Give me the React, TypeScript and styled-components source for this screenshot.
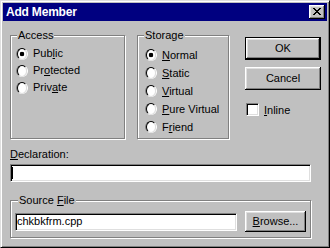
import React from "react";
import styled, { createGlobalStyle } from "styled-components";

const GlobalStyle = createGlobalStyle`
	* {
		box-sizing: border-box;
	}
	html, body {
		margin: 0;
		padding: 0;
		background: #c0c0c0;
	}
	body {
		font-family: "Liberation Sans", Arial, sans-serif;
		font-size: 11px;
		color: #000;
	}
`;

// hot: index of the underlined access-key letter
const accessOptions = [
	{ id: "public", text: "Public", hot: 3, checked: true },
	{ id: "protected", text: "Protected", hot: 2, checked: false },
	{ id: "private", text: "Private", hot: 4, checked: false },
];

const storageOptions = [
	{ id: "normal", text: "Normal", hot: 0, checked: true },
	{ id: "static", text: "Static", hot: 0, checked: false },
	{ id: "virtual", text: "Virtual", hot: 0, checked: false },
	{ id: "pure", text: "Pure Virtual", hot: 0, checked: false },
	{ id: "friend", text: "Friend", hot: 1, checked: false },
];

function Mnemonic({ text, hot }: { text: string; hot: number }) {
	return (
		<span>
			{text.slice(0, hot)}
			<Key>{text[hot]}</Key>
			{text.slice(hot + 1)}
		</span>
	);
}

function CloseGlyph() {
	const cells = [
		"11....11",
		".11..11.",
		"..1111..",
		"...11...",
		"..1111..",
		".11..11.",
		"11....11",
	];
	return (
		<svg width="8" height="7" viewBox="0 0 8 7" shapeRendering="crispEdges">
			{cells.flatMap((row, y) =>
				row.split("").map((c, x) =>
					c === "1" ? <rect key={`${x}-${y}`} x={x} y={y} width="1" height="1" fill="#000" /> : null
				)
			)}
		</svg>
	);
}

export default function App() {
	return (
		<>
			<GlobalStyle />
			<Window>
				<TitleBar>
					<Title>Add Member</Title>
					<CloseButton>
						<CloseGlyph />
					</CloseButton>
				</TitleBar>
				<Body>
					<TopRow>
						<Group $width={115} $height={104}>
							<GroupLabel>Access</GroupLabel>
							<RadioList $padTop={3} $padLeft={5}>
								{accessOptions.map((opt) => (
									<RadioRow key={opt.id} $rowHeight={17}>
										<RadioDot $checked={opt.checked} />
										<Mnemonic text={opt.text} hot={opt.hot} />
									</RadioRow>
								))}
							</RadioList>
						</Group>
						<Group $width={92} $height={104} $gap={12}>
							<GroupLabel>Storage</GroupLabel>
							<RadioList $padTop={4} $padLeft={7}>
								{storageOptions.map((opt) => (
									<RadioRow key={opt.id} $rowHeight={18}>
										<RadioDot $checked={opt.checked} />
										<Mnemonic text={opt.text} hot={opt.hot} />
									</RadioRow>
								))}
							</RadioList>
						</Group>
						<ButtonColumn>
							<Button $isDefault $width={76} $height={23}>OK</Button>
							<Button $width={76} $height={23} $top={7}>Cancel</Button>
							<CheckRow>
								<CheckBox />
								<Mnemonic text="Inline" hot={0} />
							</CheckRow>
						</ButtonColumn>
					</TopRow>

					<FieldLabel>
						<Mnemonic text="Declaration:" hot={0} />
					</FieldLabel>
					<Field $top={3}>
						<Caret />
					</Field>

					<Group $height={38} $top={18}>
						<GroupLabel $indent={7}>
							<Mnemonic text="Source File" hot={7} />
						</GroupLabel>
						<SourceRow>
							<Field $width={222}>chkbkfrm.cpp</Field>
							<Button $width={61} $height={21}>
								<Mnemonic text="Browse..." hot={0} />
							</Button>
						</SourceRow>
					</Group>
				</Body>
			</Window>
		</>
	);
}

const Key = styled.u`
	text-decoration: underline;
	text-underline-offset: 1px;
`;

const Window = styled.div`
	width: 330px;
	height: 248px;
	background: #c0c0c0;
	border: 1px solid;
	border-color: #dfdfdf #000 #000 #dfdfdf;
	box-shadow: inset 1px 1px #fff, inset -1px -1px #808080;
	padding: 2px;
	display: flex;
	flex-direction: column;
`;

const TitleBar = styled.div`
	height: 18px;
	flex: none;
	background: #000080;
	display: flex;
	align-items: center;
	justify-content: space-between;
	padding: 0 2px 0 3px;
`;

const Title = styled.span`
	color: #fff;
	font-weight: 700;
	font-size: 12px;
	letter-spacing: -0.2px;
`;

const CloseButton = styled.div`
	width: 16px;
	height: 14px;
	background: #c0c0c0;
	box-shadow: inset -1px -1px #000, inset 1px 1px #fff, inset -2px -2px #808080, inset 2px 2px #dfdfdf;
	display: flex;
	align-items: center;
	justify-content: center;
	padding: 0 1px 1px 0;
`;

const Body = styled.div`
	flex: 1;
	display: flex;
	flex-direction: column;
	padding: 14px 16px 0 7px;
`;

const TopRow = styled.div`
	display: flex;
	align-items: flex-start;
	height: 104px;
	flex: none;
`;

const Group = styled.div<{ $width?: number; $height: number; $gap?: number; $top?: number }>`
	${(p) => (p.$width ? `width: ${p.$width}px; flex: none;` : "")}
	height: ${(p) => p.$height}px;
	margin-left: ${(p) => p.$gap ?? 0}px;
	margin-top: ${(p) => p.$top ?? 0}px;
	border: 1px solid #808080;
	box-shadow: inset 1px 1px #fff, 1px 1px #fff;
`;

const GroupLabel = styled.div<{ $indent?: number }>`
	width: fit-content;
	margin: -7px 0 0 ${(p) => p.$indent ?? 6}px;
	padding: 0 1px;
	line-height: 13px;
	background: #c0c0c0;
`;

const RadioList = styled.div<{ $padTop: number; $padLeft: number }>`
	display: flex;
	flex-direction: column;
	padding: ${(p) => p.$padTop}px 0 0 ${(p) => p.$padLeft}px;
`;

const RadioRow = styled.div<{ $rowHeight: number }>`
	display: flex;
	align-items: center;
	gap: 5px;
	height: ${(p) => p.$rowHeight}px;
	line-height: 13px;
`;

const RadioDot = styled.span<{ $checked: boolean }>`
	flex: none;
	width: 12px;
	height: 12px;
	border-radius: 50%;
	border: 1px solid;
	border-color: #808080 #fff #fff #808080;
	display: flex;
	align-items: center;
	justify-content: center;

	&::before {
		content: "";
		width: 10px;
		height: 10px;
		border-radius: 50%;
		border: 1px solid;
		border-color: #000 #dfdfdf #dfdfdf #000;
		background: ${(p) =>
			p.$checked ? "radial-gradient(circle, #000 0, #000 2px, #fff 2.6px)" : "#fff"};
	}
`;

const ButtonColumn = styled.div`
	margin-left: 16px;
	padding-top: 2px;
	display: flex;
	flex-direction: column;
`;

const Button = styled.button<{ $isDefault?: boolean; $width: number; $height: number; $top?: number }>`
	flex: none;
	width: ${(p) => p.$width}px;
	height: ${(p) => p.$height}px;
	margin-top: ${(p) => p.$top ?? 0}px;
	padding: 0;
	font: inherit;
	color: #000;
	background: #c0c0c0;
	border: ${(p) => (p.$isDefault ? "1px solid #000" : "none")};
	box-shadow: inset -1px -1px #000, inset 1px 1px #fff, inset -2px -2px #808080, inset 2px 2px #dfdfdf;
	line-height: 13px;
`;

const CheckRow = styled.div`
	margin-top: 13px;
	padding-left: 1px;
	display: flex;
	align-items: center;
	gap: 5px;
	height: 13px;
`;

const CheckBox = styled.span`
	flex: none;
	width: 13px;
	height: 13px;
	background: #fff;
	border: 1px solid;
	border-color: #808080 #fff #fff #808080;
	box-shadow: inset 1px 1px #000, inset -1px -1px #dfdfdf;
`;

const FieldLabel = styled.div`
	margin-top: 9px;
	line-height: 13px;
`;

const Field = styled.div<{ $width?: number; $top?: number }>`
	${(p) => (p.$width ? `width: ${p.$width}px; flex: none;` : "")}
	height: 18px;
	flex-shrink: 0;
	margin-top: ${(p) => p.$top ?? 0}px;
	padding-left: 1px;
	background: #fff;
	border: 1px solid;
	border-color: #808080 #fff #fff #808080;
	box-shadow: inset 1px 1px #000, inset -1px -1px #dfdfdf;
	display: flex;
	align-items: center;
	line-height: 13px;
	white-space: nowrap;
`;

const Caret = styled.span`
	width: 1px;
	height: 12px;
	background: #000;
`;

const SourceRow = styled.div`
	margin-top: 4px;
	padding-left: 4px;
	display: flex;
	align-items: center;
	gap: 8px;
`;
